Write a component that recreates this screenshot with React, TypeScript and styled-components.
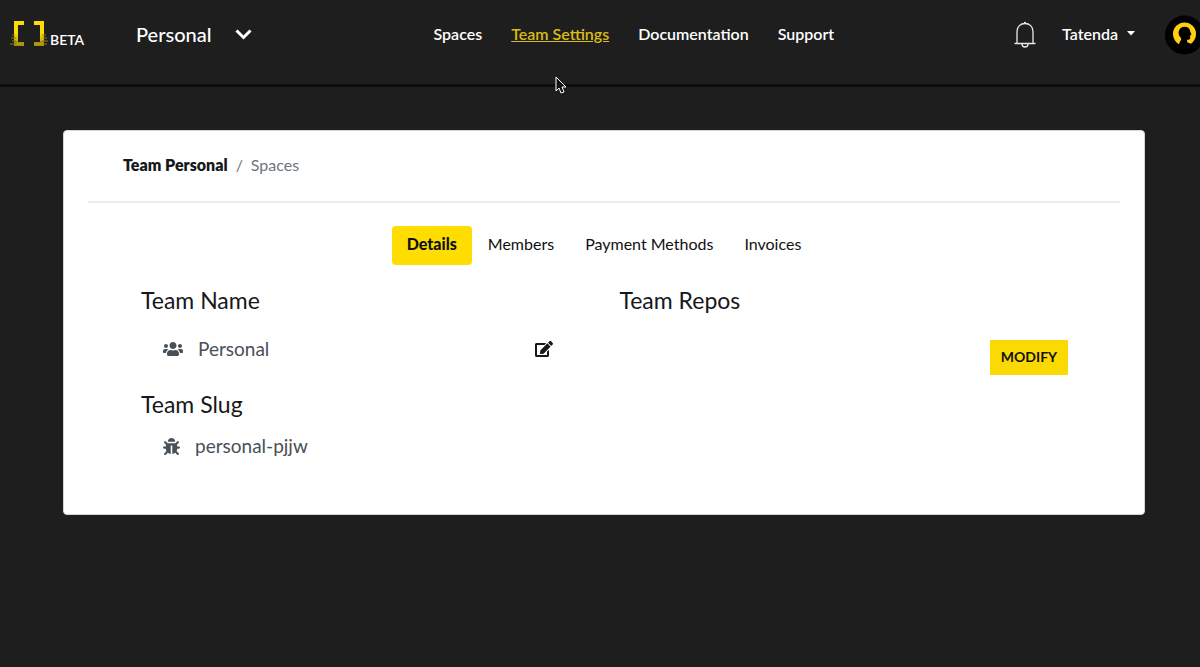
import React from 'react';
import styled, { createGlobalStyle } from 'styled-components';
import { FaUsers, FaBug, FaEdit } from 'react-icons/fa';

const GlobalStyle = createGlobalStyle`
  * { box-sizing: border-box; }
  body {
    margin: 0;
    background: #1e1e1e;
    color: #16181b;
    font-family: Lato, "Liberation Sans", sans-serif;
    font-size: 16px;
    line-height: 24px;
    overflow-x: hidden;
  }
  button { font: inherit; color: inherit; border: 0; background: none; padding: 0; cursor: pointer; }
`;

const Header = styled.header`
  display: grid;
  grid-template-columns: 22fr auto 19fr;
  align-items: start;
  height: 87px;
  padding: 14px 0 0 10px;
  border-bottom: 3px solid #0c0c0c;
  color: #fff;
  overflow: hidden;
`;

const Side = styled.div<{ $end?: boolean }>`
  display: flex;
  align-items: center;
  height: 40px;
  justify-content: ${(p) => (p.$end ? 'flex-end' : 'flex-start')};
`;

const Brand = styled.a`
  display: flex;
  align-items: flex-end;
  gap: 1px;
  width: 126px;
  color: #fff;
  font-size: 14px;
  line-height: 16px;
  font-weight: 600;
  text-decoration: none;
`;

const TeamSwitch = styled.button`
  display: flex;
  align-items: center;
  gap: 24px;
  font-size: 20px;
  font-weight: 500;
`;

const Nav = styled.nav`
  display: flex;
  align-items: center;
  gap: 29px;
  height: 40px;
`;

const NavLink = styled.a<{ $active?: boolean }>`
  font-size: 16px;
  font-weight: 600;
  color: ${(p) => (p.$active ? '#dcbc14' : '#fff')};
  text-decoration: ${(p) => (p.$active ? 'underline' : 'none')};
`;

const IconButton = styled.button`
  display: flex;
  margin-right: 26px;
`;

const UserButton = styled.button`
  display: flex;
  align-items: center;
  gap: 9px;
  margin-right: 30px;
  font-weight: 600;
`;

const Avatar = styled.button`
  display: flex;
  flex: none;
  margin-right: -4px;
`;

const Main = styled.main`
  padding: 43px 55px 0 63px;
`;

const Card = styled.section`
  padding: 0 24px 42px;
  background: #fff;
  border: 1px solid #d5d5d5;
  border-radius: 4px;
`;

const Breadcrumb = styled.nav`
  display: flex;
  gap: 8px;
  padding: 22px 35px 24px;
  border-bottom: 2px solid #ebebeb;
  color: #6c757d;
`;

const Crumb = styled.a<{ $strong?: boolean }>`
  color: ${(p) => (p.$strong ? '#16181b' : '#6c757d')};
  font-weight: ${(p) => (p.$strong ? 800 : 400)};
  text-decoration: none;
`;

const Tabs = styled.div`
  display: flex;
  justify-content: center;
  gap: 1px;
  margin-top: 23px;
`;

const Tab = styled.button<{ $active?: boolean }>`
  padding: 6px 15px 9px;
  border-radius: 4px;
  background: ${(p) => (p.$active ? '#ffdd00' : 'transparent')};
  color: #111;
  font-weight: ${(p) => (p.$active ? 900 : 400)};
`;

const Columns = styled.div`
  display: grid;
  grid-template-columns: 16fr 15fr;
  padding: 19px 52px 0 53px;
`;

const Heading = styled.h2`
  margin: 0;
  font-size: 23px;
  line-height: 32px;
  font-weight: 400;
`;

const Row = styled.div<{ $tall?: boolean }>`
  display: flex;
  align-items: center;
  height: ${(p) => (p.$tall ? '72px' : '52px')};
  padding: ${(p) => (p.$tall ? '0 66px 6px 22px' : '0 66px 0 22px')};
  color: #495057;
`;

const Value = styled.span`
  flex: 1;
  padding-left: 15px;
  font-size: 19px;
`;

const EditButton = styled.button`
  display: flex;
  color: #16181b;
`;

const ModifyButton = styled.button`
  display: block;
  width: 78px;
  height: 35px;
  margin: 24px 0 0 auto;
  padding-bottom: 2px;
  background: #fbd902;
  color: #111;
  font-size: 14px;
  font-weight: 700;
`;

const Cursor = styled.svg`
  position: fixed;
  left: 555px;
  top: 76px;
  pointer-events: none;
`;

const Logo = () => (
  <svg width="39" height="28" viewBox="0 0 39 28" aria-hidden="true">
    <defs>
      <linearGradient id="fade" x1="0" y1="0" x2="0" y2="1">
        <stop offset="0.500" stopColor="#fbdc04" />
        <stop offset="1" stopColor="#a08c12" />
      </linearGradient>
    </defs>
    <path d="M4 1h10v4H8v17h6v4H4zM24 1h10v25H24v-4h6V5h-6z" fill="url(#fade)" />
    <path d="M2 15h3M1 18h5M2 21h4M0 24h6M32 15h4M33 18h4M32 21h6M33 24h4" stroke="#8d7b12" strokeWidth="1" />
    <path d="M0 22h14M22 22h12" stroke="#1e1e1e" strokeWidth="0.600" opacity="0.500" />
  </svg>
);

const Bell = () => (
  <svg width="22" height="30" viewBox="0 0 22 30" fill="none" stroke="#e8e8e8" strokeWidth="1.300" aria-hidden="true">
    <path d="M3 24V12.500C3 7.500 6.500 4.500 11 4.500s8 3 8 8V24M1 24.500h20M8 25c0 4 6 4 6 0" strokeLinecap="round" />
    <circle cx="11" cy="3.700" r="1" fill="#e8e8e8" stroke="none" />
  </svg>
);

export default function App() {
  return (
    <>
      <GlobalStyle />
      <Header>
        <Side>
          <Brand href="#home"><Logo />BETA</Brand>
          <TeamSwitch>
            Personal
            <svg width="17" height="11" viewBox="0 0 17 11" fill="none" stroke="#fff" strokeWidth="3" aria-hidden="true">
              <path d="M1.500 1.500l7 7 7-7" />
            </svg>
          </TeamSwitch>
        </Side>
        <Nav aria-label="Main">
          <NavLink href="#spaces">Spaces</NavLink>
          <NavLink href="#team" $active>Team Settings</NavLink>
          <NavLink href="#docs">Documentation</NavLink>
          <NavLink href="#support">Support</NavLink>
        </Nav>
        <Side $end>
          <IconButton aria-label="Notifications"><Bell /></IconButton>
          <UserButton>
            Tatenda
            <svg width="8" height="6" viewBox="0 0 8 6" aria-hidden="true"><path d="M0 0h8L4 4.500z" fill="#fff" /></svg>
          </UserButton>
          <Avatar aria-label="Profile">
            <svg width="39" height="42" viewBox="0 0 39 42" aria-hidden="true">
              <circle cx="19.500" cy="22" r="19.500" fill="#000" />
              <circle cx="19.500" cy="21" r="11.500" fill="#ffd010" />
              <path d="M13 34l2-5.500c1-1 1.500-2 1-3.500-2-2-2.700-4-2.300-6.500.5-3 3-4.700 6-4.700 3.300 0 5.300 2 5.500 4.800l1.300 3-1.300.7v3c0 1.500-1.500 1.500-3.200 1.500l.2 2.500 3.300 1.200V34z" fill="#000" />
            </svg>
          </Avatar>
        </Side>
      </Header>
      <Main>
        <Card>
          <Breadcrumb aria-label="Breadcrumb">
            <Crumb href="#team" $strong>Team Personal</Crumb>
            <span>/</span>
            <Crumb href="#spaces">Spaces</Crumb>
          </Breadcrumb>
          <Tabs role="tablist">
            <Tab role="tab" aria-selected $active>Details</Tab>
            <Tab role="tab">Members</Tab>
            <Tab role="tab">Payment Methods</Tab>
            <Tab role="tab">Invoices</Tab>
          </Tabs>
          <Columns>
            <div>
              <Heading>Team Name</Heading>
              <Row $tall>
                <FaUsers size={20} />
                <Value>Personal</Value>
                <EditButton aria-label="Edit team name"><FaEdit size={18} /></EditButton>
              </Row>
              <Heading>Team Slug</Heading>
              <Row>
                <FaBug size={17} />
                <Value>personal-pjjw</Value>
              </Row>
            </div>
            <div>
              <Heading>Team Repos</Heading>
              <ModifyButton>MODIFY</ModifyButton>
            </div>
          </Columns>
        </Card>
      </Main>
      <Cursor width="12" height="19" viewBox="0 0 12 19" aria-hidden="true">
        <path d="M1 1v14l3-3 2 5 3-1-2-5h4z" fill="#111" stroke="#fff" />
      </Cursor>
    </>
  );
}
